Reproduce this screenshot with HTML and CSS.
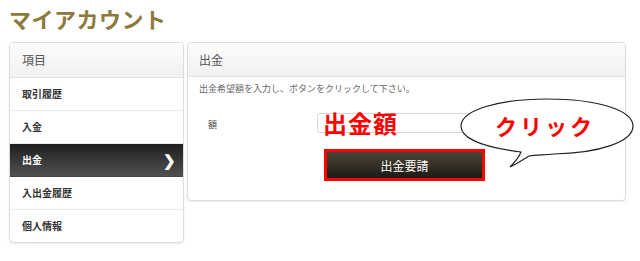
FILE: index.html
```html
<!DOCTYPE html>
<html lang="ja">
<head>
<meta charset="utf-8">
<link rel="stylesheet" href="styles.css">
</head>
<body>
<h1 class="title">マイアカウント</h1>
<div class="layout">
  <div class="panel side">
    <div class="panel-head">項目</div>
    <ul class="menu">
      <li class="menu-item">取引履歴</li>
      <li class="menu-item">入金</li>
      <li class="menu-item active">出金<span class="chev">❯</span></li>
      <li class="menu-item">入出金履歴</li>
      <li class="menu-item">個人情報</li>
    </ul>
  </div>
  <div class="panel main">
    <div class="panel-head">出金</div>
    <div class="panel-body">
      <p class="desc">出金希望額を入力し、ボタンをクリックして下さい。</p>
      <div class="form-row">
        <span class="label">額</span>
        <div class="input-wrap">
          <div class="input"></div>
          <span class="big-note">出金額</span>
        </div>
      </div>
      <div class="btn-row">
        <div class="btn-frame"><button class="btn">出金要請</button></div>
      </div>
    </div>
  </div>
</div>
<div class="bubble">
  <svg width="180" height="72" viewBox="0 0 180 72">
    <path d="M62 54 C 30 50, 2 42, 2 28 C 2 12, 40 1, 88 1 C 138 1, 174 12, 174 28 C 174 44, 140 55, 95 56 C 85 57, 78 57, 70 58 C 62 63, 56 67, 51 69 C 56 64, 60 59, 62 54 Z" fill="#fff" stroke="#222" stroke-width="1.2"/>
  </svg>
  <span class="bubble-text">クリック</span>
</div>
</body>
</html>
```
FILE: styles.css
```css
* { box-sizing: border-box; }
html, body { margin: 0; padding: 0; background: #fff; }
body {
  width: 640px;
  height: 261px;
  position: relative;
  overflow: hidden;
  font-family: "Noto Sans CJK JP", "Noto Sans", sans-serif;
  color: #333;
}
.title {
  margin: 0;
  padding: 3px 0 0 9px;
  height: 42px;
  font-size: 22px;
  line-height: 30px;
  font-weight: 700;
  color: #8a7a3b;
  letter-spacing: 0.5px;
}
.layout {
  display: flex;
  align-items: flex-start;
  gap: 3px;
  padding-left: 9px;
}
.panel {
  background: #fff;
  border: 1px solid #dcdcdc;
  border-radius: 4px;
  box-shadow: 0 1px 2px rgba(0,0,0,0.08);
  overflow: hidden;
}
.side { width: 175px; }
.main { width: 439px; }
.panel-head {
  height: 35px;
  line-height: 34px;
  padding-left: 12px;
  font-size: 12px;
  color: #555;
  background: linear-gradient(#fcfcfc, #f1f1f1);
  border-bottom: 1px solid #e3e3e3;
}
.main .panel-head { height: 34px; line-height: 33px; padding-left: 11px; }
.menu { list-style: none; margin: 0; padding: 0; }
.menu-item {
  height: 33px;
  line-height: 32px;
  padding-left: 12px;
  font-size: 10px;
  font-weight: 700;
  color: #333;
  border-bottom: 1px solid #ececec;
  position: relative;
}
.menu-item:last-child { border-bottom: none; height: 32px; }
.menu-item.active {
  background: linear-gradient(#1f1f1f, #505050);
  color: #fff;
  border-bottom-color: #444;
}
.chev {
  position: absolute;
  right: 7px;
  top: 0;
  font-size: 15px;
  font-weight: 900;
  color: #fff;
}
.panel-body { padding: 6px 11px 19px 11px; }
.desc {
  margin: 0;
  font-size: 9px;
  line-height: 12px;
  color: #666;
}
.form-row {
  display: flex;
  align-items: center;
  height: 22px;
  margin-top: 17px;
}
.label {
  width: 118px;
  padding-left: 9px;
  padding-top: 3px;
  font-size: 9px;
  color: #444;
}
.input-wrap { position: relative; }
.input {
  width: 158px;
  height: 20px;
  border: 1px solid #d6d6d6;
  border-radius: 3px;
  background: #fff;
}
.big-note {
  position: absolute;
  left: 6px;
  top: -5px;
  font-size: 24px;
  line-height: 30px;
  font-weight: 700;
  color: #ff0000;
  letter-spacing: 1px;
  white-space: nowrap;
}
.btn-row {
  display: flex;
  padding-left: 125px;
  margin-top: 15px;
}
.btn-frame {
  border: 3px solid #ff0000;
  width: 161px;
  height: 32px;
}
.btn {
  display: block;
  width: 100%;
  height: 100%;
  border: none;
  padding: 0;
  margin: 0;
  background: linear-gradient(#4d4437, #1d1a15);
  color: #fff;
  font-family: inherit;
  font-size: 12px;
}
.bubble {
  position: absolute;
  left: 459px;
  top: 98px;
  width: 180px;
  height: 72px;
}
.bubble svg { display: block; }
.bubble-text {
  position: absolute;
  left: 36px;
  top: 12px;
  font-size: 22px;
  line-height: 30px;
  font-weight: 700;
  color: #ff0000;
  letter-spacing: 3px;
  white-space: nowrap;
}
```
